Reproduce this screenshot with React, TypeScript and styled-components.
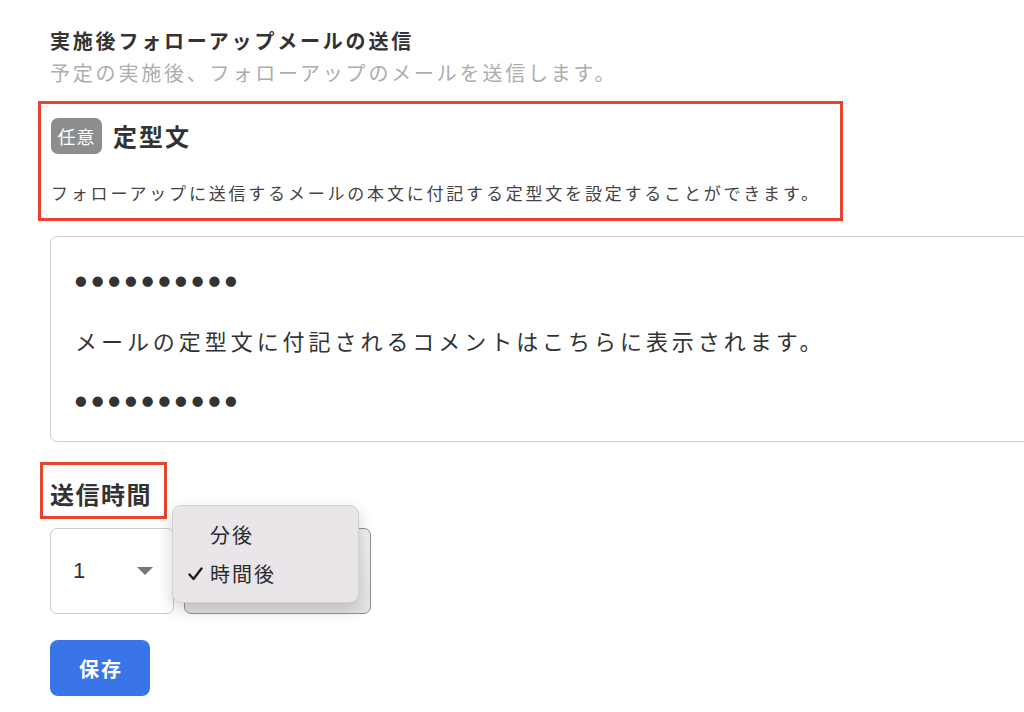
import styled, { createGlobalStyle } from 'styled-components';

const GlobalStyle = createGlobalStyle`
  html, body {
    margin: 0;
    padding: 0;
    background: #ffffff;
    overflow: hidden;
  }
  body {
    font-family: "Noto Sans CJK JP", "Noto Sans", sans-serif;
    color: #333333;
  }
`

const Page = styled.main`
  padding: 25px 0 0 50px;
  width: 974px;
  height: 687px;
  box-sizing: content-box;
`
const Title = styled.h2`
  margin: 0;
  font-size: 20px;
  font-weight: 700;
  line-height: 32px;
  letter-spacing: 2.8px;
  color: #333333;
`
const Lead = styled.p`
  margin: 0;
  font-size: 20px;
  line-height: 32px;
  letter-spacing: 2.8px;
  color: #adadad;
`
const Highlight = styled.section`
  margin: 12px 0 0 -12px;
  width: 805px;
  box-sizing: border-box;
  border: 3px solid #e6442e;
  padding: 14px 10px 13px;
`
const FieldHead = styled.div`
  display: flex;
  align-items: center;
  gap: 11px;
  height: 36px;
`
const Badge = styled.span`
  display: flex;
  align-items: center;
  justify-content: center;
  width: 51px;
  height: 36px;
  border-radius: 7px;
  background: #8d8d8d;
  color: #ffffff;
  font-size: 18px;
  letter-spacing: 1px;
  line-height: 1;
`
const FieldName = styled.h3`
  margin: 0;
  font-size: 24px;
  font-weight: 700;
  letter-spacing: 2px;
  line-height: 36px;
  color: #333333;
`
const Help = styled.p`
  margin: 27px 0 0;
  font-size: 17px;
  line-height: 24px;
  letter-spacing: 2.8px;
  color: #444444;
`
const Preview = styled.div`
  margin-top: 15px;
  width: 1000px;
  box-sizing: border-box;
  border: 1px solid #cfcfcf;
  border-radius: 7px;
  padding: 13px 24px 11px;
`
const PreviewLine = styled.div<{ $dots?: boolean }>`
  height: 60px;
  line-height: 60px;
  color: #333333;
  font-family: ${p => p.$dots ? '"DejaVu Sans", sans-serif' : '"Noto Sans CJK JP", sans-serif'};
  font-size: ${p => p.$dots ? '13.5px' : '22px'};
  letter-spacing: ${p => p.$dots ? '4.9px' : '3.95px'};
`
const TimeLabel = styled.h3`
  display: inline-block;
  margin: 20px 0 0 -10px;
  border: 3px solid #e6442e;
  padding: 14px 12px 7px 7px;
  font-size: 24px;
  font-weight: 700;
  line-height: 30px;
  letter-spacing: 1.5px;
  color: #333333;
`
const SelectRow = styled.div`
  position: relative;
  display: flex;
  gap: 10px;
  margin-top: 9px;
`
const NumberSelect = styled.div`
  display: flex;
  align-items: center;
  justify-content: space-between;
  width: 124px;
  height: 86px;
  box-sizing: border-box;
  border: 1px solid #cccccc;
  border-radius: 7px;
  padding: 0 20px 0 22px;
  background: #ffffff;
  font-family: "Liberation Sans", sans-serif;
  font-size: 22px;
  color: #333333;
`
const Caret = styled.span`
  width: 0;
  height: 0;
  border-left: 8px solid transparent;
  border-right: 8px solid transparent;
  border-top: 8px solid #777777;
`
const UnitSelect = styled.div`
  width: 187px;
  height: 86px;
  box-sizing: border-box;
  border: 1px solid #8f8f8f;
  border-radius: 7px;
  background: linear-gradient(180deg, #f0f0f0 0%, #e2e2e2 100%);
`
const Menu = styled.ul`
  position: absolute;
  left: 122px;
  top: -23px;
  width: 187px;
  height: 98px;
  box-sizing: border-box;
  margin: 0;
  padding: 9px 0 0;
  list-style: none;
  background: #e9e5e8;
  border: 1px solid #d3cfd2;
  border-radius: 9px;
  box-shadow: 0 6px 16px rgba(0, 0, 0, 0.18);
`
const MenuItem = styled.li`
  position: relative;
  padding-left: 37px;
  height: 39px;
  line-height: 39px;
  font-size: 20px;
  letter-spacing: 2px;
  color: #2b2b2b;
`
const Check = styled.svg`
  position: absolute;
  left: 15px;
  top: 13px;
  width: 15px;
  height: 14px;
`
const SaveButton = styled.button`
  display: block;
  margin-top: 26px;
  width: 100px;
  height: 56px;
  border: none;
  border-radius: 8px;
  background: #3a74e9;
  color: #ffffff;
  font-family: "Noto Sans CJK JP", sans-serif;
  font-size: 20px;
  font-weight: 700;
  letter-spacing: 2px;
  padding: 0 0 0 2px;
`

const App = () => {
  return (
    <>
      <GlobalStyle />
      <Page>
        <Title>実施後フォローアップメールの送信</Title>
        <Lead>予定の実施後、フォローアップのメールを送信します。</Lead>
        <Highlight>
          <FieldHead>
            <Badge>任意</Badge>
            <FieldName>定型文</FieldName>
          </FieldHead>
          <Help>フォローアップに送信するメールの本文に付記する定型文を設定することができます。</Help>
        </Highlight>
        <Preview>
          <PreviewLine $dots>●●●●●●●●●●</PreviewLine>
          <PreviewLine>メールの定型文に付記されるコメントはこちらに表示されます。</PreviewLine>
          <PreviewLine $dots>●●●●●●●●●●</PreviewLine>
        </Preview>
        <TimeLabel>送信時間</TimeLabel>
        <SelectRow>
          <NumberSelect>1<Caret /></NumberSelect>
          <UnitSelect />
          <Menu>
            <MenuItem>分後</MenuItem>
            <MenuItem>
              <Check viewBox="0 0 15 14">
                <path d="M1.5 7.5 L5.5 12 L13.5 1.5" fill="none" stroke="#1e1e1e" strokeWidth="2.4" strokeLinecap="round" strokeLinejoin="round" />
              </Check>
              時間後
            </MenuItem>
          </Menu>
        </SelectRow>
        <SaveButton>保存</SaveButton>
      </Page>
    </>
  )
}
export default App;
